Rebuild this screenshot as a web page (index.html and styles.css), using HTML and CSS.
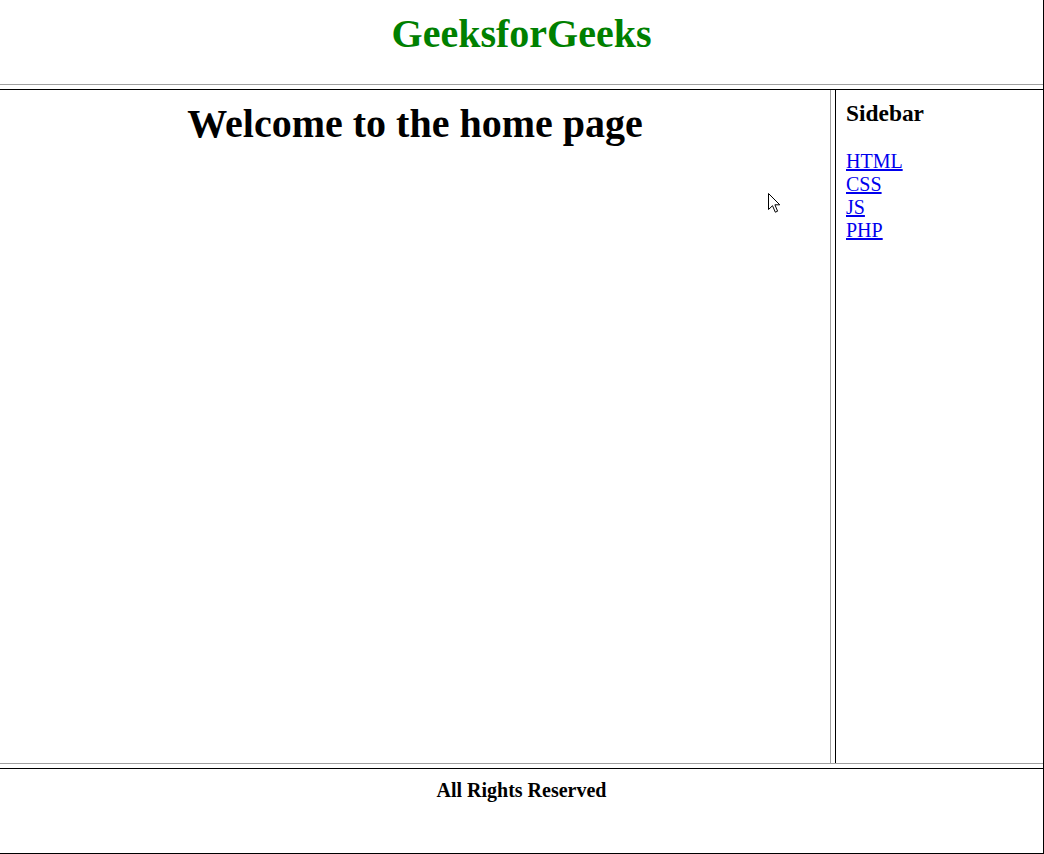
FILE: index.html
```html
<!DOCTYPE html>
<html>
<head>
<meta charset="utf-8">
<title>GeeksforGeeks</title>
<link rel="stylesheet" href="styles.css">
</head>
<body>
<div class="page">
  <header class="header">
    <h1 class="brand">GeeksforGeeks</h1>
  </header>
  <div class="middle">
    <main class="main">
      <h1 class="welcome">Welcome to the home page</h1>
      <svg class="cursor" width="13" height="21" viewBox="0 0 13 21" aria-hidden="true">
        <path d="M0.5 0.5 L0.5 16.5 L4.5 12.7 L7.3 19.2 L9.6 18.2 L6.9 11.8 L11.8 11.8 Z" fill="#fff" stroke="#000" stroke-width="1" stroke-linejoin="miter"/>
      </svg>
    </main>
    <aside class="sidebar">
      <h3 class="side-title">Sidebar</h3>
      <a href="#">HTML</a><br>
      <a href="#">CSS</a><br>
      <a href="#">JS</a><br>
      <a href="#">PHP</a>
    </aside>
  </div>
  <footer class="footer">
    <h4 class="rights">All Rights Reserved</h4>
  </footer>
</div>
</body>
</html>
```
FILE: styles.css
```css
html, body {
  margin: 0;
  padding: 0;
  background: #fff;
}

body {
  font-family: "Liberation Serif", "Times New Roman", serif;
  font-size: 20px;
  color: #000;
}

.page {
  width: 1044px;
  height: 854px;
  box-sizing: border-box;
  border-right: 1px solid #000;
  border-bottom: 1px solid #000;
  display: flex;
  flex-direction: column;
}

.header {
  height: 85px;
  box-sizing: border-box;
  border-bottom: 1px solid #a0a0a0;
  padding: 11px 10px 0;
  text-align: center;
}

.brand {
  margin: 0;
  font-size: 40px;
  font-weight: bold;
  color: #008000;
  line-height: 46px;
}

.middle {
  margin-top: 4px;
  height: 675px;
  box-sizing: border-box;
  border-top: 1px solid #000;
  border-bottom: 1px solid #a0a0a0;
  display: flex;
  gap: 4px;
}

.main {
  position: relative;
  width: 831px;
  box-sizing: border-box;
  border-right: 1px solid #a0a0a0;
  padding: 11px 10px 0;
  text-align: center;
}

.welcome {
  margin: 0;
  font-size: 40px;
  font-weight: bold;
  line-height: 46px;
}

.cursor {
  position: absolute;
  left: 768px;
  top: 103px;
}

.sidebar {
  flex: 1;
  border-left: 1px solid #000;
  padding: 10px 10px 0;
  line-height: 23px;
}

.side-title {
  margin: 0 0 23px;
  font-size: 23.4px;
  font-weight: bold;
  line-height: 27px;
}

.sidebar a {
  color: #0000ee;
  text-decoration: underline;
}

.footer {
  flex: 1;
  margin-top: 4px;
  border-top: 1px solid #000;
  padding: 10px 10px 0;
  text-align: center;
}

.rights {
  margin: 0;
  font-size: 20px;
  font-weight: bold;
  line-height: 23px;
}
```
